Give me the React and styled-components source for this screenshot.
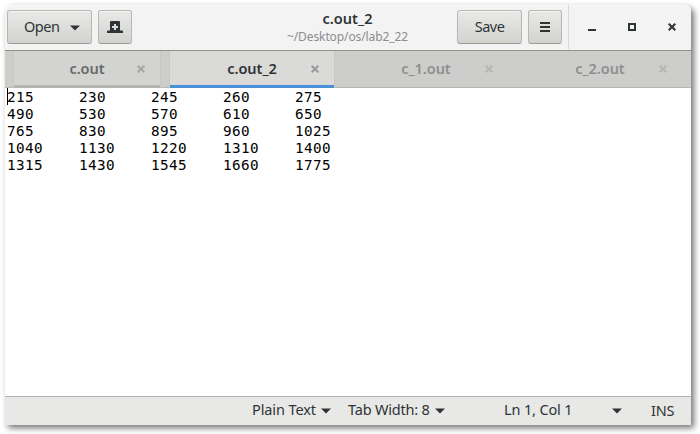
import React from "react";
import styled, { createGlobalStyle } from "styled-components";

const GlobalStyle = createGlobalStyle`
  * { box-sizing: border-box; }
  body { margin: 0; background: #fff; overflow: hidden; }
`;

const Desktop = styled.div`
  width: 700px;
  height: 434px;
  padding: 5px 9px 9px 5px;
  background: #fff;
`;

const Window = styled.main`
  width: 686px;
  height: 420px;
  display: flex;
  flex-direction: column;
  overflow: hidden;
  border-radius: 6px 6px 0 0;
  background: #fff;
  box-shadow: 3px 3px 6px rgba(0, 0, 0, 0.55);
  font: 14.5px/20px "Noto Sans", "Open Sans", sans-serif;
  color: #2e3436;
`;

const Header = styled.header`
  height: 46px;
  flex: none;
  display: grid;
  grid-template-columns: 87px 40px 325px 65px 46px 1fr;
  background: #f3f3f3;
  border-bottom: 1px solid #91918c;
  box-shadow: inset 0 1px #fbfbfb;
`;

const Button = styled.button`
  width: ${(p) => p.$width}px;
  height: 34px;
  margin: 5px 0 0 ${(p) => p.$left}px;
  padding: 0 11px 0 16px;
  display: flex;
  align-items: center;
  justify-content: ${(p) => (p.$center ? "center" : "space-between")};
  ${(p) => p.$center && "padding: 0;"}
  border: 1px solid #b6b6b3;
  border-bottom-color: #9c9c98;
  border-radius: 3px;
  background: linear-gradient(#e9e9e7, #d2d2cf);
  box-shadow: inset 0 1px rgba(255, 255, 255, 0.55);
  color: #2e3436;
  font: inherit;
  svg { margin-top: ${(p) => (p.$center ? 0 : 2)}px; }
`;

const Label = styled.span`
  display: block;
  white-space: pre;
  letter-spacing: ${(p) => p.$track ?? -0.5}px;
  padding-bottom: ${(p) => p.$lift ?? 2}px;
`;

const Titles = styled.div`
  padding-top: 3px;
  display: flex;
  flex-direction: column;
  align-items: center;
  width: 433px;
  margin-left: -1px;
`;

const Title = styled.strong`
  font-size: 14.5px;
  line-height: 20px;
  font-weight: 600;
  letter-spacing: 0.05px;
`;

const Path = styled.span`
  font-size: 12px;
  line-height: 18px;
  letter-spacing: -0.1px;
  color: #8b8e8f;
`;

const Controls = styled.div`
  display: flex;
  align-items: center;
  gap: 32px;
  padding-left: 19px;
  border-left: 1px solid #d9d9d7;
  margin-bottom: 1px;
`;

const TabBar = styled.nav`
  height: 37px;
  flex: none;
  display: flex;
  gap: 10px;
  padding-left: 9px;
  background: #cdcdcb;
  box-shadow: inset 0 -1px #b6b6b3;
`;

const kinds = {
  hover: ["#d3d3d1", "#b5b5b0", "#666a6b", "#a7a8a6"],
  active: ["#dadad8", "#4a90d9", "#2e3436", "#989a99"],
  idle: ["transparent", "transparent", "#8d9090", "#b6b7b5"],
};

const Tab = styled.div`
  width: ${(p) => p.$width}px;
  height: 37px;
  display: grid;
  grid-template-columns: 1fr 10px;
  align-items: center;
  padding: 0 13px 0 0;
  background: ${(p) => kinds[p.$kind][0]};
  border-bottom: 3px solid ${(p) => kinds[p.$kind][1]};
  color: ${(p) => kinds[p.$kind][2]};
  box-shadow: ${(p) => (p.$kind === "idle" ? "none" : "-1px 0 #c7c7c4, 1px 0 #c7c7c4")};
  svg { color: ${(p) => kinds[p.$kind][3]}; margin-top: 2px; }
`;

const TabLabel = styled.span`
  padding: 0 0 1px 23px;
  text-align: center;
  font-size: 14.5px;
  font-weight: 600;
  letter-spacing: -0.05px;
`;

const Editor = styled.pre`
  flex: 1;
  margin: 0;
  padding: 1px 0 0 2px;
  font: 14.3px/17px "DejaVu Sans Mono", monospace;
  letter-spacing: 0.39px;
  tab-size: 8;
  color: #000;
  position: relative;
`;

const Caret = styled.i`
  position: absolute;
  left: 2px;
  top: 0;
  width: 1px;
  height: 17px;
  background: #000;
`;

const StatusBar = styled.footer`
  height: 29px;
  flex: none;
  display: grid;
  grid-template-columns: 96px 156px 147px 1fr;
  align-items: center;
  padding-left: 247px;
  background: #e8e8e6;
  border-top: 1px solid #b2b2ae;
`;

const Status = styled.div`
  display: flex;
  align-items: center;
  justify-content: space-between;
  width: ${(p) => p.$width}px;
`;

const Arrow = () => (
  <svg width="10" height="6" viewBox="0 0 10 6"><path d="M0 .5H10L5 5.5Z" fill="currentColor" /></svg>
);

const Cross = () => (
  <svg width="8" height="8" viewBox="0 0 8 8">
    <path d="M.7.7 7.3 7.3M7.3.7.7 7.3" stroke="currentColor" strokeWidth="2" />
  </svg>
);

const NewTabIcon = () => (
  <svg width="16" height="12" viewBox="0 0 16 12">
    <path fillRule="evenodd" fill="currentColor" d="M4 0h8q1 0 1 1v8.5h2q1 0 1 1V12H0v-1.5q0-1 1-1h2V1q0-1 1-1ZM7 3v2H5v2h2v2h2V7h2V5H9V3Z" />
  </svg>
);

const MenuIcon = () => (
  <svg width="10" height="10"><path d="M0 1h10M0 5h10M0 9h10" stroke="currentColor" strokeWidth="2" /></svg>
);

const Minimize = () => (
  <svg width="8" height="8"><path d="M0 7h8" stroke="currentColor" strokeWidth="2" /></svg>
);

const Maximize = () => (
  <svg width="8" height="8"><path d="M1 1h6v6H1Z" fill="none" stroke="currentColor" strokeWidth="2" /></svg>
);

const tabs = [
  ["c.out", "hover", 146],
  ["c.out_2", "active", 164],
  ["c_1.out", "idle", 164],
  ["c_2.out", "idle", 164],
];

const rows = [
  [215, 230, 245, 260, 275],
  [490, 530, 570, 610, 650],
  [765, 830, 895, 960, 1025],
  [1040, 1130, 1220, 1310, 1400],
  [1315, 1430, 1545, 1660, 1775],
];

export default function App() {
  return (
    <Desktop>
      <GlobalStyle />
      <Window>
        <Header>
          <Button $width={85} $left={2}><Label>Open</Label><Arrow /></Button>
          <Button $width={34} $left={6} $center><NewTabIcon /></Button>
          <Titles>
            <Title>c.out_2</Title>
            <Path>~/Desktop/os/lab2_22</Path>
          </Titles>
          <Button $width={65} $left={0} $center><Label>Save</Label></Button>
          <Button $width={34} $left={6} $center><MenuIcon /></Button>
          <Controls><Minimize /><Maximize /><Cross /></Controls>
        </Header>
        <TabBar>
          {tabs.map(([name, kind, width]) => (
            <Tab key={name} $kind={kind} $width={width}>
              <TabLabel>{name}</TabLabel><Cross />
            </Tab>
          ))}
        </TabBar>
        <Editor><Caret />{rows.map((r) => r.join("\t")).join("\n")}</Editor>
        <StatusBar>
          <Status $width={79}><Label $track={-0.1} $lift={4}>Plain Text</Label><Arrow /></Status>
          <Status $width={97}><Label $track={-0.2} $lift={4}>Tab Width: 8</Label><Arrow /></Status>
          <Status $width={118}><Label $track={-0.15} $lift={4}>Ln 1, Col 1</Label><Arrow /></Status>
          <Status $width={25}><Label $track={-0.2} $lift={2}>INS</Label></Status>
        </StatusBar>
      </Window>
    </Desktop>
  );
}
